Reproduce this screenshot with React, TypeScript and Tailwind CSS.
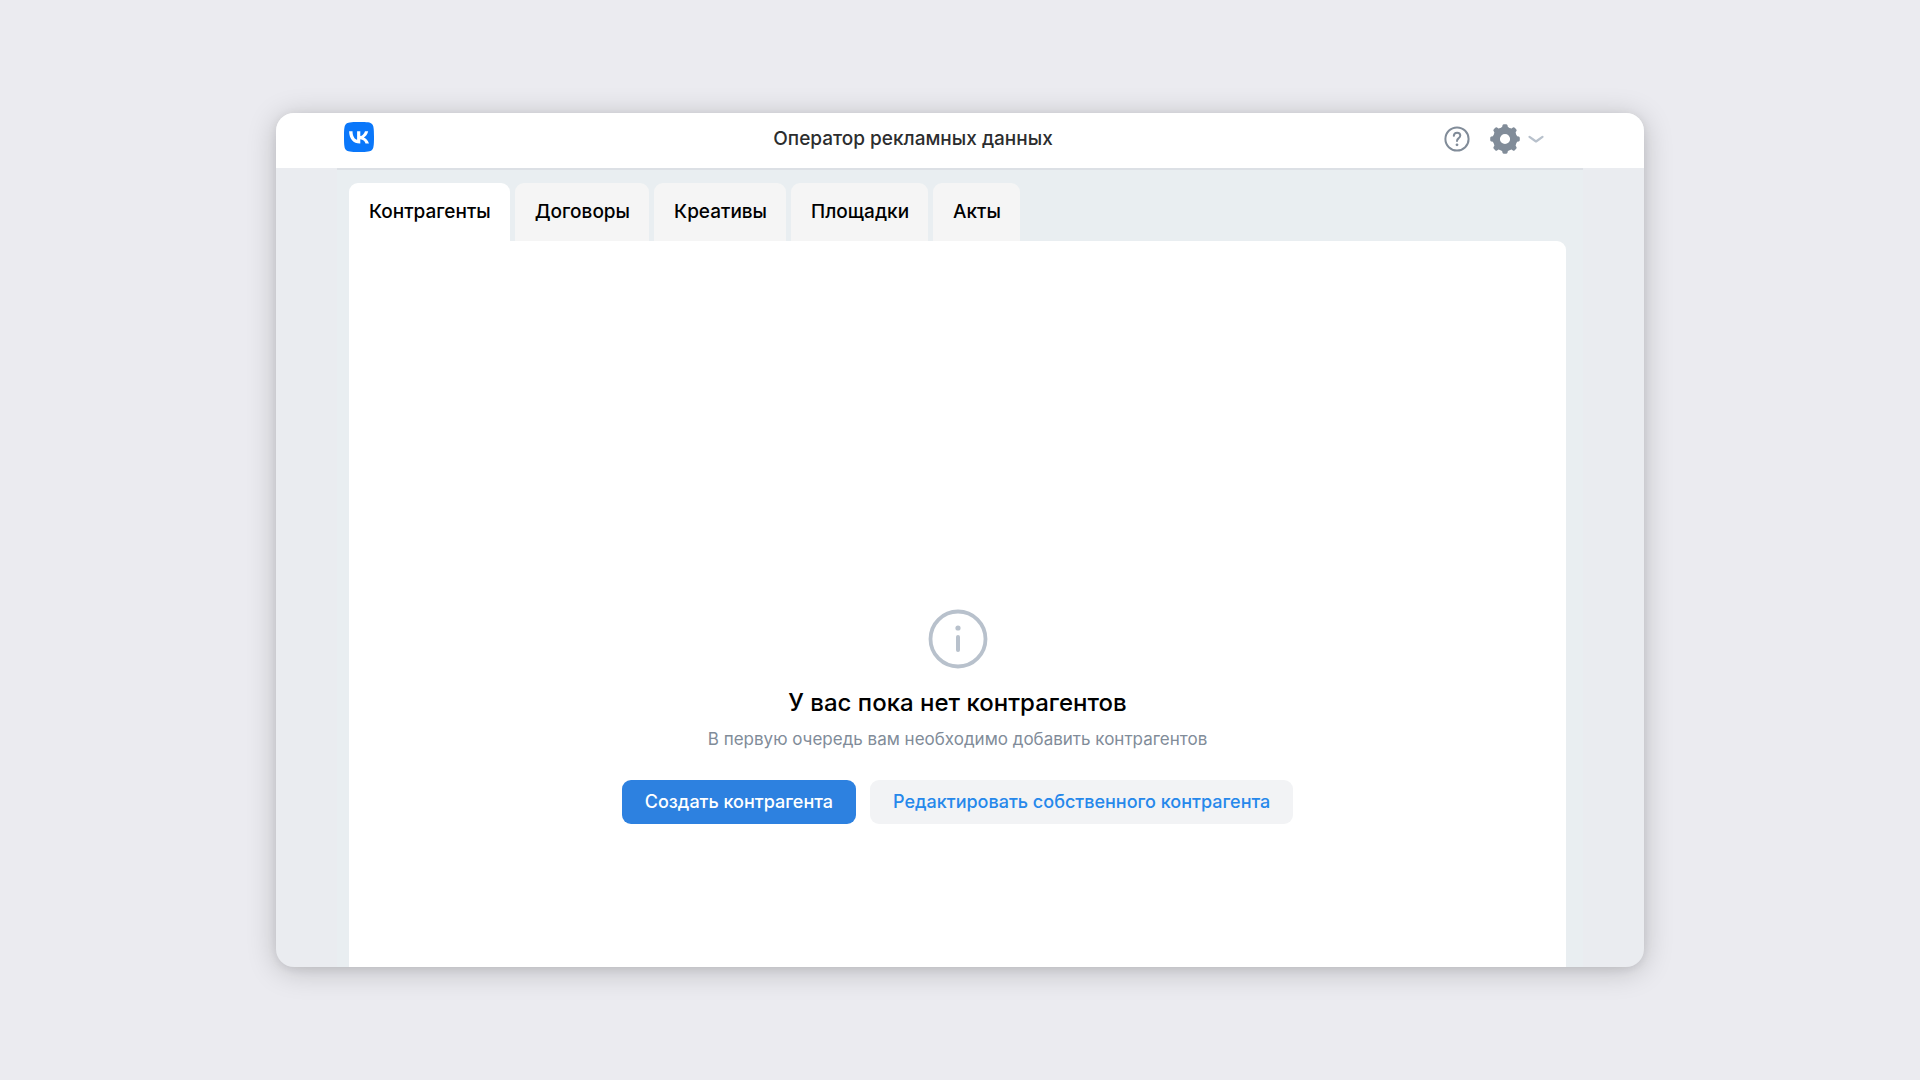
const tabs = ['Контрагенты', 'Договоры', 'Креативы', 'Площадки', 'Акты'];

const toothAngles = [0, 45, 90, 135, 180, 225, 270, 315];

function VkLogo() {
  return (
    <svg viewBox="0 0 30 30" className="block size-[30px]" aria-hidden="true">
      <path
        d="M15 0C23.5 0 26.4.3 28 2s2 4.500 2 13-.4 11.400-2 13-4.500 2-13 2-11.400-.4-13-2-2-4.500-2-13 .4-11.400 2-13S6.500 0 15 0Z"
        fill="#0a77fa"
      />
      <path
        d="M15.900 21.400C9.200 21.400 5.300 17 5.100 9.200h3.400c.1 5.700 2.600 8.100 4.600 8.600V9.200h3.200v4.900c1.900-.2 4-2.500 4.700-4.900h3.200c-.5 3-2.700 5.300-4.300 6.200 1.600.8 4.100 2.600 5.100 6h-3.500c-.7-2.300-2.600-4-5.200-4.200v4.200h-.4Z"
        fill="#fff"
      />
    </svg>
  );
}

function HelpIcon() {
  return (
    <svg viewBox="0 0 26 26" fill="none" stroke="#818c99" strokeLinecap="round" className="block size-[26px]" aria-hidden="true">
      <circle cx="13" cy="13" r="11.600" strokeWidth="2" />
      <path d="M9.800 9.800c.2-1.900 1.500-3 3.300-3s3.200 1.100 3.200 2.800c0 1.400-.8 2-1.800 2.800-1 .8-1.500 1.400-1.500 2.700" strokeWidth="2" />
      <circle cx="13" cy="18.800" r="1.400" fill="#818c99" stroke="none" />
    </svg>
  );
}

function GearIcon() {
  return (
    <svg viewBox="0 0 30 30" className="block size-[30px]" aria-hidden="true">
      <circle cx="15" cy="15" r="8.600" fill="none" stroke="#818c99" strokeWidth="7" />
      {toothAngles.map((angle) => (
        <path
          key={angle}
          d="M10.800 4.200 12.200 2.800 12.500 1.300Q12.800.2 14 .2h2q1.200 0 1.500 1.100l.3 1.500 1.400 1.400Z"
          fill="#818c99"
          transform={`rotate(${angle} 15 15)`}
        />
      ))}
    </svg>
  );
}

function ChevronIcon() {
  return (
    <svg viewBox="0 0 16 8" fill="none" className="block h-2 w-4" aria-hidden="true">
      <path d="M1.500 1.800 8 6.500l6.500-4.700" stroke="#b8c1cc" strokeWidth="2.200" strokeLinecap="round" strokeLinejoin="round" />
    </svg>
  );
}

function InfoIcon() {
  return (
    <svg viewBox="0 0 60 60" fill="none" className="block size-[60px]" aria-hidden="true">
      <circle cx="30" cy="30" r="27.500" stroke="#b8c1cc" strokeWidth="3.800" />
      <circle cx="30" cy="19" r="2.600" fill="#b8c1cc" />
      <path d="M30 28v13" stroke="#b8c1cc" strokeWidth="4" strokeLinecap="round" />
    </svg>
  );
}

export default function App() {
  return (
    <div className="flex min-h-screen bg-[#ebebf0] px-[276px] py-[113px] font-['Inter','Noto_Sans',sans-serif]">
      <div className="flex flex-1 flex-col overflow-hidden rounded-[18px] bg-[#eaecf0] shadow-[0_2px_10px_rgba(0,0,0,0.08),0_4px_30px_rgba(0,0,0,0.2)]">
        <header className="bg-white px-[61px]">
          <div className="flex items-start px-[7px] pt-[9px] pb-3">
            <a href="#" aria-label="VK">
              <VkLogo />
            </a>
            <h1 className="flex-1 pl-2 text-center text-[19px] leading-[34px] font-medium text-[#2c2d2e]">
              Оператор рекламных данных
            </h1>
            <div className="flex h-[34px] items-center gap-5 pr-8">
              <button type="button" aria-label="Помощь">
                <HelpIcon />
              </button>
              <button type="button" aria-label="Настройки" className="flex items-center gap-2">
                <GearIcon />
                <ChevronIcon />
              </button>
            </div>
          </div>
        </header>
        <div className="mx-[61px] flex flex-1 flex-col border-t-2 border-[#dce0e5] bg-[#e9eef1] pt-[13px] pr-[17px] pl-3">
          <nav className="flex gap-[5px]" role="tablist">
            {tabs.map((tab, index) => (
              <button
                key={tab}
                type="button"
                role="tab"
                aria-selected={index === 0}
                className="rounded-t-[9px] bg-[#f5f5f5] pt-[17px] pr-[19px] pb-[17px] pl-5 text-[19px] leading-6 font-medium text-black aria-selected:bg-white"
              >
                {tab}
              </button>
            ))}
          </nav>
          <main className="flex flex-1 flex-col items-center justify-end rounded-tr-[9px] bg-white pb-[143px] text-center">
            <InfoIcon />
            <h2 className="mt-[18px] text-2xl leading-8 font-medium text-black">У вас пока нет контрагентов</h2>
            <p className="mt-2 text-[17px] leading-6 text-[#818c99]">
              В первую очередь вам необходимо добавить контрагентов
            </p>
            <div className="mt-[29px] flex gap-[14px]">
              <button type="button" className="rounded-[9px] bg-[#2d81e0] px-[23px] py-[10px] text-lg leading-6 font-medium text-white">
                Создать контрагента
              </button>
              <button type="button" className="rounded-[9px] bg-[#f2f3f5] px-[23px] py-[10px] text-lg leading-6 font-medium text-[#2688eb]">
                Редактировать собственного контрагента
              </button>
            </div>
          </main>
        </div>
      </div>
    </div>
  );
}
